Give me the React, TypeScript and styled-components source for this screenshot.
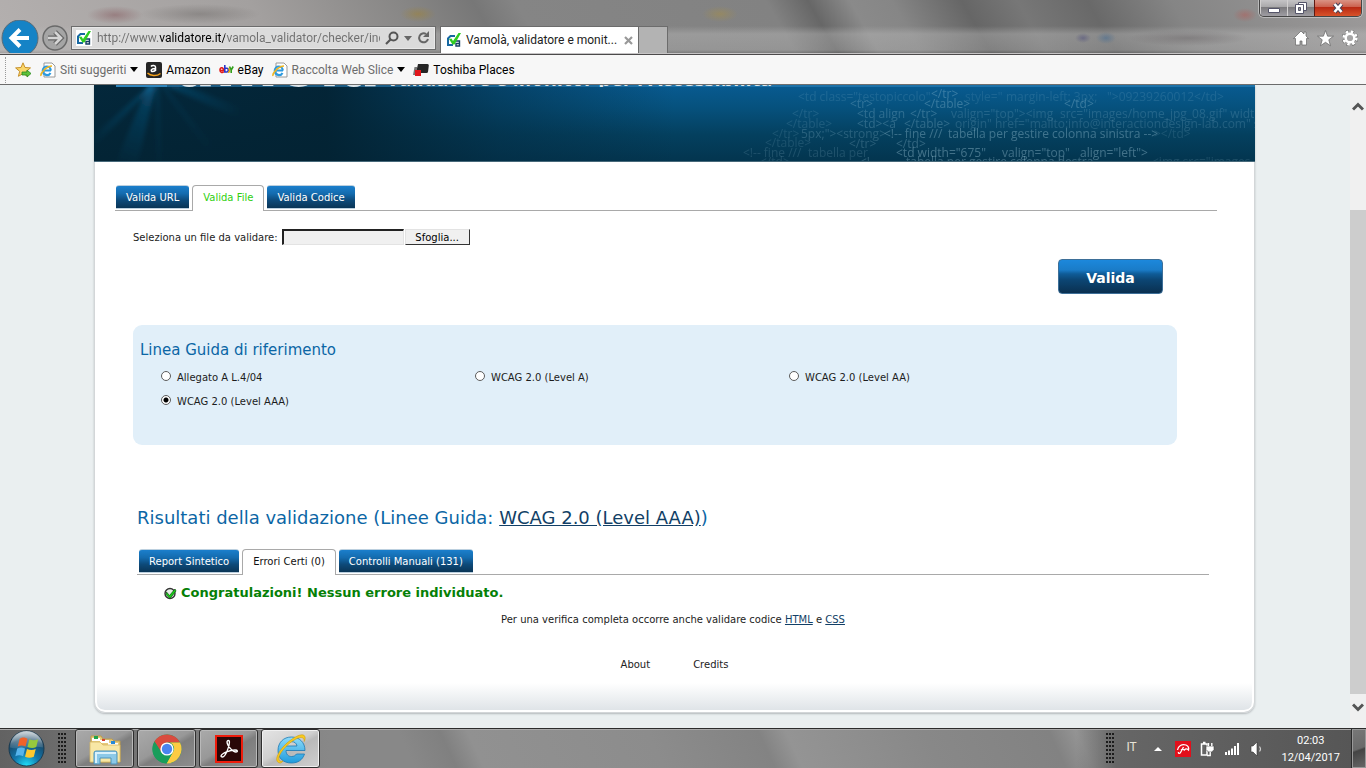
import React, { useState } from 'react';
import styled, { createGlobalStyle, css } from 'styled-components';

const ui = "Roboto, 'Noto Sans', sans-serif";
const web = "'DejaVu Sans', Verdana, sans-serif";

const GlobalStyle = createGlobalStyle`
  *, *::before, *::after { box-sizing: border-box; }
  body { margin: 0; overflow: hidden; background: #eaeff0; font-family: ${web}; font-size: 10px; color: #1c1c1c; }
  button, input { font: inherit; margin: 0; }
  h1, h2, p, ul, fieldset { margin: 0; padding: 0; border: 0; }
  svg { display: block; flex: none; }
`;

const Desktop = styled.div`
  display: flex;
  flex-direction: column;
  height: 100vh;
`;

/* Browser frame */

const TitleBar = styled.header`
  display: flex;
  align-items: flex-end;
  height: 54px;
  flex: none;
  overflow: hidden;
  border-bottom: 1px solid #c6c4c5;
  background:
    radial-gradient(ellipse 28px 9px at 115px 15px, rgba(122, 66, 72, 0.4), transparent),
    radial-gradient(ellipse 60px 10px at 200px 14px, rgba(90, 86, 84, 0.35), transparent),
    radial-gradient(ellipse 18px 8px at 418px 14px, rgba(160, 130, 50, 0.5), transparent),
    radial-gradient(ellipse 18px 8px at 720px 14px, rgba(160, 140, 80, 0.6), transparent),
    radial-gradient(ellipse 12px 7px at 1245px 15px, rgba(180, 90, 85, 0.5), transparent),
    radial-gradient(ellipse 8px 5px at 1083px 38px, rgba(85, 85, 125, 0.6), transparent),
    radial-gradient(ellipse 10px 6px at 1106px 38px, rgba(75, 110, 145, 0.6), transparent),
    radial-gradient(ellipse 60px 8px at 1188px 38px, rgba(105, 100, 102, 0.5), transparent),
    linear-gradient(to bottom, transparent 26px, rgba(190, 190, 190, 0.4) 34px, rgba(190, 190, 190, 0.3) 50px, rgba(100, 100, 100, 0.2)),
    linear-gradient(60deg, #b4b0af 0, #a3a09f 20%, #878685 31%, #777 36%, #858585 39%, #828282 57%, #676767 60%, #8a8a8a 63%, #868686 66%, #666 71%, #777 75%, #696969 80%, #858585 86%, #9c9a9a 100%);
`;

const NavGroup = styled.div`
  display: flex;
  align-items: center;
  height: 31px;
  flex: none;
`;

const RoundButton = styled.button`
  padding: 0;
  border: 0;
  background: none;
  height: 36px;
`;

const AddressBar = styled.div`
  display: flex;
  align-items: center;
  gap: 5px;
  width: 365px;
  height: 24px;
  flex: none;
  margin: 0 4px 3px 2px;
  padding: 0 5px 0 4px;
  border: 1px solid #6c6c6c;
  background: #dbdbdb;
  box-shadow: inset 0 0 0 1px #e8e8e8;
`;

const AddressInput = styled.input`
  flex: 1;
  min-width: 0;
  padding: 0;
  border: 0;
  outline: 0;
  font-family: ${ui};
  font-size: 12px;
  line-height: 18px;
  -webkit-text-fill-color: transparent;
  background: linear-gradient(to right, #6f6f6f 62px, #000 62px 128px, #6f6f6f 128px);
  background-clip: text;
`;

const IconButton = styled.button`
  display: grid;
  place-items: center;
  padding: 0;
  border: 0;
  background: none;
`;

const BrowserTab = styled.div`
  display: flex;
  align-items: center;
  gap: 4px;
  width: 199px;
  height: 27px;
  padding: 0 5px;
  border: 1px solid #6c6c6c;
  border-bottom: 0;
  background: #fff;
  font-family: ${ui};
  font-size: 12px;
  color: #222;
  flex: none;
  white-space: nowrap;
  span { flex: 1; }
`;

const NewTab = styled.button`
  width: 29px;
  height: 27px;
  padding: 0;
  border: 1px solid #6c6c6c;
  border-width: 1px 1px 0 0;
  background: #b3b3b3;
`;

const TitleRight = styled.div`
  display: flex;
  flex-direction: column;
  align-items: flex-end;
  justify-content: space-between;
  height: 54px;
  margin-left: auto;
  padding: 0 4px 6px 0;
`;

const WindowButtons = styled.div`
  display: flex;
  height: 18px;
  border: 1px solid #454545;
  border-top: 0;
  border-radius: 0 0 5px 5px;
  overflow: hidden;
  box-shadow: 0 0 0 1px rgba(230, 230, 230, 0.5);
`;

const WindowButton = styled.button<{ $close?: boolean }>`
  display: grid;
  place-items: center;
  width: ${p => (p.$close ? 47 : 27)}px;
  padding: 0;
  border: 0;
  border-left: 1px solid ${p => (p.$close ? '#5e1a12' : '#d2d0d0')};
  background: ${p => p.$close
    ? 'linear-gradient(#dc9a8c 0, #cc6350 45%, #b92a14 50%, #d8532a 100%)'
    : 'linear-gradient(#c9c8ca 0, #aaa9ab 45%, #7c7b7e 50%, #9f9da3 100%)'};
`;

const Tools = styled.div`
  display: flex;
  gap: 8px;
  height: 18px;
  padding-right: 4px;
`;

const FavoritesBar = styled.nav`
  display: flex;
  align-items: center;
  height: 31px;
  flex: none;
  padding: 0 5px;
  border-top: 1px solid #4c4a4b;
  border-bottom: 1px solid #6b6b6b;
  background: #f7f7f7;
  font-family: ${ui};
  font-size: 12px;
`;

const Favorite = styled.a<{ $muted?: boolean }>`
  display: flex;
  align-items: center;
  gap: 4px;
  margin-left: 8px;
  color: ${p => (p.$muted ? '#6d6d6d' : '#000')};
  text-decoration: none;
  white-space: nowrap;
`;

const Grip = styled.span`
  height: 26px;
  border-left: 1px dotted #9a9a9a;
  margin-right: 9px;
`;

/* Page */

const Viewport = styled.div`
  display: flex;
  flex: 1;
  min-height: 0;
`;

const PageArea = styled.div`
  flex: 1;
  min-width: 0;
  padding: 0 95px 15px 94px;
  background: #eaeff0;
`;

const Card = styled.main`
  display: flex;
  flex-direction: column;
  height: 100%;
  border: 1px solid #d3d6d8;
  border-top: 0;
  border-radius: 0 0 11px 11px;
  background: linear-gradient(to top, #dde2e6 0, #fff 29px);
  box-shadow: inset 0 -2px 0 #fff, inset 2px 0 0 #fff, inset -2px 0 0 #fff, 0 1px 2px #b4b9bc;
`;

const Banner = styled.div`
  position: relative;
  height: 77px;
  flex: none;
  margin: 0 -1px;
  overflow: hidden;
  border-bottom: 1px solid #47697a;
  background:
    linear-gradient(to right, rgba(3, 34, 50, 0.9) 0, rgba(3, 34, 50, 0.95) 20%, rgba(3, 42, 64, 0.5) 35%, transparent 50%),
    linear-gradient(to bottom, #085b91 0, #06517d 30%, #04405f 65%, #03354f 100%);
`;

const BannerArt = styled.svg<{ $side: 'left' | 'right' }>`
  position: absolute;
  top: 0;
  ${p => p.$side}: 0;
`;

/* Only the foot of the logotype shows while the page is scrolled */
const Brand = styled.div`
  position: relative;
  display: flex;
  align-items: baseline;
  height: 52px;
  margin-top: -50px;
  padding-left: 81px;
  overflow: hidden;
  color: #dfe6ea;
  h1 { font-size: 60px; line-height: 60px; font-weight: bold; }
  p { margin-left: 6px; font: bold 20px/24px 'Open Sans', sans-serif; white-space: nowrap; }
`;

const TabList = styled.div<{ $inner?: boolean }>`
  display: flex;
  gap: 3px;
  height: 26px;
  flex: none;
  margin: ${p => (p.$inner ? '19px 45px 0 42px' : '23px 37px 0 20px')};
  padding-left: ${p => (p.$inner ? 2 : 1)}px;
  border-bottom: 1px solid #a9a9a9;
`;

const Tab = styled.button<{ $active?: boolean; $accent?: string }>`
  height: 24px;
  padding: 0 10px;
  border: 1px solid #bcd0df;
  border-width: 1px 0;
  border-radius: 3px 3px 0 0;
  background: linear-gradient(#1b7fcc 0, #146bae 35%, #0d4a7a 65%, #0a3556 100%);
  color: #fff;
  white-space: nowrap;
  ${p => p.$active && css`
    position: relative;
    height: 26px;
    padding-bottom: 2px;
    border-color: #a9a9a9;
    border-width: 1px 1px 0;
    border-radius: 4px 4px 0 0;
    background: #fff;
    color: ${p.$accent};
  `}
`;

const FileRow = styled.div`
  display: flex;
  align-items: center;
  height: 16px;
  margin: 18px 38px 0;
  input { width: 122px; height: 16px; margin: 0 1px 0 4px; padding: 0 3px; border: solid #e3e3e3; border-top-color: #222; border-left-color: #222; border-width: 2px 1px 1px 2px; background: #f0f0f0; outline: 0; }
  button { width: 65px; height: 16px; padding: 1px 0 0; border: 1px solid #e3e3e3; border-right-color: #333; border-bottom-color: #333; background: #f0f0f0; line-height: 14px; color: #000; }
`;

const SubmitButton = styled.button`
  align-self: flex-end;
  width: 105px;
  height: 35px;
  flex: none;
  margin: 14px 91px 0 0;
  padding: 2px 0 0;
  border: 1px solid #3d6f98;
  border-radius: 4px;
  background: linear-gradient(#1c88dc 0, #1a7cc8 30%, #0f5c98 42%, #0c4674 60%, #0a3050 100%);
  color: #fff;
  font-size: 14px;
  font-weight: bold;
`;

const Guidelines = styled.fieldset`
  flex: none;
  height: 120px;
  margin: 31px 77px 0 38px;
  padding: 16px 75px 0 7px;
  border-radius: 9px;
  background: #e1eff9;
`;

const GuidelinesTitle = styled.h2`
  font-size: 15px;
  line-height: 18px;
  font-weight: normal;
  color: #0b66a5;
`;

const Options = styled.div`
  display: grid;
  grid-template-columns: repeat(3, 1fr);
  row-gap: 8px;
  margin: 10px 0 0 20px;
`;

const Option = styled.label`
  display: flex;
  align-items: center;
  gap: 6px;
  height: 16px;
  input {
    appearance: none;
    width: 10px;
    height: 10px;
    margin: 0 0 2px 1px;
    border: 1px solid #5c5c5c;
    border-radius: 50%;
    background: #fff;
  }
  input:checked { background: radial-gradient(#000 0 2px, #fff 3px); }
`;

const ResultTitle = styled.h2`
  flex: none;
  margin: 61px 42px 0;
  font-size: 18px;
  line-height: 24px;
  font-weight: normal;
  color: #0b66a5;
  white-space: nowrap;
`;

const TextLink = styled.a`
  color: #123f66;
  text-decoration: underline;
`;

const Success = styled.p`
  display: flex;
  align-items: center;
  gap: 4px;
  margin: 9px 69px 0;
  font-size: 13px;
  line-height: 18px;
  font-weight: bold;
  color: #068006;
`;

const CheckNote = styled.p`
  margin-top: 11px;
  padding-right: 3px;
  line-height: 14px;
  text-align: center;
`;

const Footer = styled.footer`
  display: flex;
  justify-content: center;
  gap: 43px;
  margin-top: 31px;
  line-height: 14px;
  a { color: #222; text-decoration: none; }
`;

const ScrollBar = styled.div`
  display: flex;
  flex-direction: column;
  width: 16px;
  flex: none;
  background: #f0f0f0;
`;

const ScrollButton = styled(IconButton)<{ $end?: boolean }>`
  height: ${p => (p.$end ? 34 : 42)}px;
  margin-bottom: ${p => (p.$end ? 0 : 83)}px;
  padding-bottom: ${p => (p.$end ? 8 : 0)}px;
`;

const ScrollThumb = styled.div`
  flex: 1;
  background: #cdcdcd;
`;

/* Taskbar */

const Taskbar = styled.footer`
  display: flex;
  align-items: center;
  height: 40px;
  flex: none;
  border-top: 1px solid #2c2c2c;
  box-shadow: inset 0 1px 0 #aaa;
  background:
    linear-gradient(to right, #626262 0, #6c6c6c 60px, transparent 330px),
    linear-gradient(to left, #555 0, #666 250px, transparent 290px),
    linear-gradient(65deg, #888 30%, #808080 33%, #919191 35%, #8c8c8c 48%, #838383 56%, #949494 58%, #888 68%, #828282 77%, #949494 79%, #929292 83%, #7c7c7c 86%, #7a7a7a 100%);
  font-family: ${ui};
  color: #fff;
`;

const StartButton = styled(IconButton)`
  margin: 0 13px 0 8px;
`;

const Dots = styled.span`
  width: 9px;
  height: 32px;
  background: radial-gradient(circle at 1px 1px, #1c1c1c 1px, transparent 1px) 0 0 / 3px 4px;
`;

const TaskButtons = styled.div`
  display: flex;
  gap: 3px;
  margin-left: 8px;
`;

const TaskButton = styled(IconButton)<{ $active?: boolean }>`
  width: 59px;
  height: 39px;
  border: 1px solid #2e2e2e;
  border-radius: 3px;
  box-shadow: inset 0 0 0 1px ${p => (p.$active ? '#f0f0f0' : '#b9b9b9')};
  background: ${p => p.$active
    ? 'linear-gradient(150deg, #e4e4e4 0, #d0d0d0 45%, #b9b9b9 55%, #cfcfcf 100%)'
    : 'linear-gradient(150deg, #aaa 0, #989898 45%, #7e7e7e 55%, #8d8d8d 100%)'};
`;

const Tray = styled.div`
  display: flex;
  align-items: center;
  height: 100%;
  margin-left: auto;
`;

const Language = styled.span`
  width: 16px;
  margin: 0 8px 4px 11px;
  font-size: 12px;
  color: #e8e4d8;
`;

const TrayIcons = styled.div`
  display: flex;
  align-items: center;
  gap: 9px;
  button { width: 16px; }
`;

const Clock = styled.time`
  margin: 0 12px 0 16px;
  text-align: center;
  font-size: 11px;
  line-height: 17px;
`;

const ShowDesktop = styled.button`
  width: 14px;
  height: 39px;
  padding: 0;
  border: 1px solid #999;
  outline: 1px solid #2b2b2b;
  background: linear-gradient(160deg, #777 0, #6a6a6a 50%, #444 55%, #666 100%);
`;

/* Icons */

const VamolaIcon = () => (
  <svg width="16" height="16" viewBox="0 0 16 16">
    <path d="M0 0h16v16H0z" fill="#fff" />
    <path d="M9 4H4.500L2 6.500V13h5" fill="none" stroke="#1768a2" strokeWidth="2" />
    <path d="M9.800 9h3.700v5H10v-2.500h3.500" fill="none" stroke="#143f63" strokeWidth="1.400" />
    <path d="M3 7l2.500-.5L7 9l5.500-8H15L8.500 12.500h-2z" fill="#2fcb22" />
  </svg>
);

const IePageIcon = () => (
  <svg width="16" height="16" viewBox="0 0 16 16">
    <path d="M4 1h8l3 3v11H4z" fill="#fff" stroke="#999" />
    <path d="M11 8.500H2.800a4 4 0 0 1 8 0M3 9a4 4 0 0 0 7.500 2" fill="none" stroke="#2d9adf" strokeWidth="2.200" />
    <path d="M1 14c-1-3 6-10 11-10" fill="none" stroke="#f0b51f" strokeWidth="1.500" />
  </svg>
);

const Caret = ({ color = '#000' }: { color?: string }) => (
  <svg width="8" height="5" viewBox="0 0 8 5"><path d="M0 0h8L4 5z" fill={color} /></svg>
);

const IeIcon = () => (
  <svg width="32" height="32" viewBox="0 0 32 32">
    <defs>
      <linearGradient id="ie" x1="0" y1="0" x2="0" y2="1"><stop offset="0" stopColor="#8fdcfa" /><stop offset="1" stopColor="#1f9bdd" /></linearGradient>
    </defs>
    <path d="M30 17.500H11c0 4 2.500 6 5.500 6 2.500 0 4-1 5-2.500h8c-2 6-6.500 9-13 9C8 30 3 25 3 17.500 3 9.500 8.500 4 16.500 4S30 9.500 30 17.500zM22 13c-.5-3-2.500-4.300-5.500-4.300S11.500 10.500 11 13z" fill="url(#ie)" stroke="#1b78b4" strokeWidth=".8" />
    <path d="M5 30C-2 29 3 18 12 10 20 3 29-1 30 4c.4 1.300 0 3-.8 4.500C29.500 5 27 3 21 6 11 11 2 23 4 27c.6 1.500 2 1.500 4 1-1 1.300-2 2-3 2z" fill="#f8cb1c" stroke="#cf9b10" strokeWidth=".6" />
  </svg>
);

const ChromeIcon = () => (
  <svg width="30" height="30" viewBox="0 0 30 30">
    <circle cx="15" cy="15" r="14.500" fill="#199d5b" />
    <path d="M2.500 7.500A14.500 14.500 0 0 1 28 8.500H15a6.500 6.500 0 0 0-6.300 5z" fill="#d94b3f" />
    <path d="M28 8.500a14.500 14.500 0 0 1-13.500 21l6.200-11A6.500 6.500 0 0 0 18 8.500z" fill="#fbcb43" />
    <path d="M2.500 7.500L9.400 18.500 15 15V8.500z" fill="#d94b3f" />
    <path d="M2.500 7.500A14.500 14.500 0 0 0 14.500 29.500l6-11-11 0z" fill="#199d5b" />
    <circle cx="15" cy="15" r="6.600" fill="#fff" />
    <circle cx="15" cy="15" r="5.200" fill="#4a84f0" />
  </svg>
);

const FolderIcon = () => (
  <svg width="34" height="32" viewBox="0 0 34 32">
    <path d="M3 3h10l2 3h9l2 2h6v21H3z" fill="#e7cb7c" stroke="#bd9c4a" />
    <path d="M4 5h8v3H4zM12 7h9v3h-9zM20 10h10v3H20z" fill="#fff" />
    <path d="M6 3h4v3H6z" fill="#1fa34a" /><path d="M14 6h3v2h-3z" fill="#d8412c" /><path d="M23 8h4v3h-4z" fill="#2488d8" />
    <path d="M2 9h10l3 3h17v17H2z" fill="#f8e7a5" stroke="#d6b863" strokeWidth=".8" />
    <path d="M6 31V20q0-2 2-2h19q2 0 2 2v11h-6v-6H12v6z" fill="#8cc9e8" stroke="#4d93bb" />
    <path d="M7 20h21M8 20v10" stroke="#d9f1fb" strokeWidth="2" />
  </svg>
);

const AcrobatIcon = () => (
  <svg width="28" height="28" viewBox="0 0 28 28">
    <path d="M1 1h26v26H1z" fill="#2a0707" stroke="#ee1c0c" strokeWidth="2" />
    <path d="M6 21c1-3 9-6 14-6 3 0 3 2 1 2-3 0-9-6-9-10 0-2 2.500-2 2.500 0 0 4-4 15-7 15-1 0-1.500-.5-1.500-1z" fill="none" stroke="#fff" strokeWidth="1.300" />
  </svg>
);

const StartOrb = () => (
  <svg width="37" height="37" viewBox="0 0 38 38">
    <defs>
      <radialGradient id="orb" cx=".5" cy="1" r=".95"><stop offset="0" stopColor="#22e2fb" /><stop offset=".4" stopColor="#1277ac" /><stop offset=".8" stopColor="#174767" /><stop offset="1" stopColor="#6e8797" /></radialGradient>
      <linearGradient id="shine" x1="0" y1="0" x2="0" y2="1"><stop offset="0" stopColor="#fff" stopOpacity=".65" /><stop offset="1" stopColor="#fff" stopOpacity=".1" /></linearGradient>
    </defs>
    <circle cx="19" cy="19" r="18" fill="url(#orb)" stroke="#1b3b50" />
    <path d="M2 18a17 17 0 0 1 34 0c-10-3-23 3-34 0z" fill="url(#shine)" />
    <path d="M12 9c3-2 5-1.500 8 0l-2 8c-3-1.500-5-1.500-8 0z" fill="#f0622a" />
    <path d="M22 9.500c3 1.500 6 1.500 9 0l-2 8c-3 1.500-6 1-9 0z" fill="#97c93c" />
    <path d="M9.500 19c3-1.500 5-1.500 8 0l-2 8c-3-1.500-5-1.500-8 0z" fill="#56b4ec" />
    <path d="M19.500 19.500c3 1.500 6 1.500 9 0l-2 8c-3 1.500-6 1.500-9 0z" fill="#fdc82f" />
  </svg>
);

/* Each fragment: x, baseline, opacity, source text */
const codeLines: [number, number, number, string][] = [
  [58, 16, 0.14, '<td class="testopiccolo"'], [225, 16, 0.12, 'style="'], [266, 16, 0.14, 'margin-left: 3px;'], [367, 16, 0.14, '">09239260012</td>'],
  [191, 13, 0.3, '</tr>'],
  [110, 23, 0.25, '<tr>'], [184, 23, 0.3, '</table>'], [324, 23, 0.3, '</td>'],
  [52, 33, 0.15, '</tr>'], [117, 33, 0.25, '<td align'], [170, 33, 0.28, '</tr>'],
  [211, 33, 0.18, 'valign="top"><img'], [320, 33, 0.18, 'src="images/home_jpg_08.gif" width'],
  [46, 43, 0.15, '</table>'], [117, 43, 0.25, '<td><a'], [164, 43, 0.26, '</table>'], [215, 43, 0.18, 'origin" href="mailto:info@interactiondesign-lab.com" st'],
  [32, 53, 0.14, '</tr>'], [61, 53, 0.22, '5px;"><strong>'], [144, 53, 0.34, '<!-- fine ///'], [208, 53, 0.36, 'tabella per gestire colonna sinistra -->'], [414, 53, 0.14, '></td>'],
  [25, 62, 0.14, '</table>'], [109, 63, 0.22, '</tr>'], [156, 63, 0.28, '</td>'],
  [3, 72, 0.16, '<!-- fine ///'], [68, 72, 0.16, 'tabella per'],
  [156, 72, 0.38, '<td width="675"'], [262, 72, 0.36, 'valign="top"'], [340, 72, 0.38, 'align="left">'],
  [20, 81, 0.15, '</td>'], [120, 81, 0.25, '<!--'], [166, 81, 0.32, 'tabella per gestire colonna destra'], [412, 81, 0.15, '<img src="images'],
];

const CodePattern = () => (
  <BannerArt $side="right" width="515" height="77" aria-hidden="true">
    <g fill="#a8cfe0" fontFamily="'Open Sans', sans-serif" fontSize="12">
      {codeLines.map(([x, y, o, t], i) => <text key={i} x={x} y={y} opacity={o}>{t}</text>)}
    </g>
  </BannerArt>
);

const Rays = () => (
  <BannerArt $side="left" width="100%" height="77" aria-hidden="true">
    <defs>
      <radialGradient id="glow" cx="62" cy="0" r="90" gradientUnits="userSpaceOnUse"><stop offset="0" stopColor="#1c8ccb" stopOpacity=".5" /><stop offset=".3" stopColor="#0f6799" stopOpacity=".3" /><stop offset="1" stopColor="#0f6799" stopOpacity="0" /></radialGradient>
      <filter id="soft"><feGaussianBlur stdDeviation="2" /></filter>
    </defs>
    <g fill="url(#glow)" filter="url(#soft)">
      <path d="M56 0L0 50V62L60 0z" /><path d="M54 0L22 77H44L62 0z" /><path d="M62 0L62 77H68L65 0z" opacity=".4" /><path d="M70 0L160 40 170 32 90 0z" /><path d="M66 0L120 77H134L70 0z" opacity=".3" />
    </g>
    <path d="M73 1H2000" stroke="#2f86be" strokeWidth="2" opacity=".55" />
    <path d="M22 0h51v2H22z" fill="#2f86be" />
  </BannerArt>
);

const guidelines = ['Allegato A L.4/04', 'WCAG 2.0 (Level A)', 'WCAG 2.0 (Level AA)', 'WCAG 2.0 (Level AAA)'];

export default function App() {
  const [url, setUrl] = useState('http://www.validatore.it/vamola_validator/checker/index.php');
  const [level, setLevel] = useState(guidelines[3]);
  return (
    <Desktop>
      <GlobalStyle />
      <TitleBar>
        <NavGroup>
          <RoundButton aria-label="Indietro">
            <svg width="41" height="36" viewBox="0 0 41 36">
              <circle cx="20" cy="18" r="18" fill="#1583c6" stroke="#5b6b76" />
              <path d="M29 18H13M20 9.500L11.500 18l8.500 8.500" fill="none" stroke="#fff" strokeWidth="4" />
            </svg>
          </RoundButton>
          <RoundButton aria-label="Avanti">
            <svg width="28" height="36" viewBox="0 0 28 36">
              <circle cx="14" cy="18" r="12" fill="#a5a5a5" stroke="#696969" strokeWidth="1.500" />
              <path d="M7 18h11M14 12l6 6-6 6" fill="none" stroke="#666" strokeWidth="5" />
              <path d="M7 18h11M14 12l6 6-6 6" fill="none" stroke="#d4d4d4" strokeWidth="2.600" />
            </svg>
          </RoundButton>
        </NavGroup>
        <AddressBar>
          <VamolaIcon />
          <AddressInput aria-label="Indirizzo" value={url} onChange={e => setUrl(e.target.value)} />
          <IconButton aria-label="Cerca"><svg width="14" height="14" viewBox="0 0 14 14"><circle cx="8.500" cy="5.500" r="4" fill="none" stroke="#555" strokeWidth="2" /><path d="M5.500 8.500L1 13" stroke="#555" strokeWidth="2.200" /></svg></IconButton>
          <IconButton aria-label="Cronologia"><Caret color="#666" /></IconButton>
          <IconButton aria-label="Aggiorna"><svg width="13" height="14" viewBox="0 0 13 14"><path d="M9 3A4.500 4.500 0 1 0 11 8" fill="none" stroke="#666" strokeWidth="2" /><path d="M12 0v6H6z" fill="#666" /></svg></IconButton>
        </AddressBar>
        <BrowserTab>
          <VamolaIcon />
          <span>Vamolà, validatore e monit...</span>
          <IconButton aria-label="Chiudi scheda"><svg width="9" height="9" viewBox="0 0 9 9"><path d="M1 1l7 7M8 1L1 8" stroke="#999" strokeWidth="2.200" /></svg></IconButton>
        </BrowserTab>
        <NewTab aria-label="Nuova scheda" />
        <TitleRight>
          <WindowButtons>
            <WindowButton aria-label="Riduci a icona"><svg width="12" height="12" viewBox="0 0 12 12"><path d="M.5 6.500h11v4H.5z" fill="#fff" stroke="#55556a" /></svg></WindowButton>
            <WindowButton aria-label="Ripristina"><svg width="12" height="12" viewBox="0 0 12 12"><path d="M3.500.5h8v8h-8z" fill="#fff" stroke="#55556a" /><path d="M.5 2.500h8v9h-8z" fill="#fff" stroke="#55556a" /><path d="M3.500 5.500h2v3h-2z" fill="#999" stroke="#55556a" /></svg></WindowButton>
            <WindowButton $close aria-label="Chiudi"><svg width="12" height="12" viewBox="0 0 12 12"><path d="M2.500 2l7 8M9.500 2l-7 8" stroke="#4c4458" strokeWidth="4.600" /><path d="M2.500 2l7 8M9.500 2l-7 8" stroke="#fff" strokeWidth="2.600" /></svg></WindowButton>
          </WindowButtons>
          <Tools>
            <IconButton aria-label="Home"><svg width="16" height="16" viewBox="0 0 16 16"><path d="M8 1L.5 8.500h2V15H7v-4h2v4h4.500V8.500h2L13 6V2h-2v2z" fill="#fff" stroke="#666" strokeWidth=".7" /></svg></IconButton>
            <IconButton aria-label="Preferiti"><svg width="17" height="17" viewBox="0 0 16 16"><path d="M8 .5l2 5.300h5.500l-4.400 3.400 1.600 5.600L8 11.600l-4.700 3.200 1.600-5.600L.5 5.800H6z" fill="#fff" stroke="#666" strokeWidth=".7" /></svg></IconButton>
            <IconButton aria-label="Strumenti"><svg width="16" height="16" viewBox="0 0 16 16"><circle cx="8" cy="8" r="6.300" fill="none" stroke="#666" strokeWidth="3.800" strokeDasharray="2.900 2.050" /><circle cx="8" cy="8" r="6.300" fill="none" stroke="#fff" strokeWidth="2.800" strokeDasharray="2.500 2.450" /><circle cx="8" cy="8" r="4.300" fill="none" stroke="#fff" strokeWidth="2.400" /></svg></IconButton>
          </Tools>
        </TitleRight>
      </TitleBar>

      <FavoritesBar aria-label="Preferiti">
        <Grip />
        <IconButton aria-label="Aggiungi ai preferiti">
          <svg width="17" height="16" viewBox="0 0 17 16"><path d="M8 .8l2 4.700 5.500.4-4.200 3.400 1.300 5L8 11.600l-4.600 2.700 1.300-5L.6 5.900 6 5.500z" fill="#fbd76b" stroke="#c6902a" /><path d="M7 10h5V8l4 3.500-4 3.500v-2H7z" fill="#5fc13a" stroke="#2a8c22" strokeWidth=".8" /></svg>
        </IconButton>
        <Favorite href="#siti" $muted><IePageIcon />Siti suggeriti<Caret /></Favorite>
        <Favorite href="#amazon">
          <svg width="16" height="16" viewBox="0 0 16 16"><rect width="16" height="16" rx="2" fill="#252525" /><path d="M5 4.500c1-1.500 4.500-1.500 4.500.5v4M9.500 6.500c-5-.3-5 3-3 3 1.500 0 3-1 3-2.500" fill="none" stroke="#fff" strokeWidth="1.500" /><path d="M1.500 11c3 3 9 3.500 13 .5" fill="none" stroke="#f5a21c" strokeWidth="1.500" /></svg>
          Amazon
        </Favorite>
        <Favorite href="#ebay">
          <svg width="15" height="10" viewBox="0 0 15 10" fill="none" strokeWidth="1.600"><path d="M1 5.500h3.500C4.500 2 1 2 1 5s3 3 3.500 1.500" stroke="#e01818" /><path d="M5.800 0v7h2c2 0 2-3.800 0-3.800h-2" stroke="#2a35c8" /><path d="M9 7c2 1 2-3 .5-3.800" stroke="#e8a80c" /><path d="M10.500 1.500l1.700 3.500v3M14.200 1.500L12.200 5" stroke="#33a01c" /></svg>
          eBay
        </Favorite>
        <Favorite href="#slice" $muted><IePageIcon />Raccolta Web Slice<Caret /></Favorite>
        <Favorite href="#toshiba">
          <svg width="16" height="14" viewBox="0 0 16 14"><path d="M5 1h9.500q1.500 0 1.300 1.500L15 9q-.2 1-1.500 1H3z" fill="#252525" /><path d="M1.500 4H4v8H0z" fill="#777" /><path d="M2 7h6v6H2z" fill="#e1161c" /></svg>
          Toshiba Places
        </Favorite>
      </FavoritesBar>

      <Viewport>
        <PageArea>
          <Card>
            <Banner>
              <Rays />
              <CodePattern />
              <Brand>
                <h1>amolà</h1>
                <p>Validatore e Monitor per l'Accessibilità</p>
              </Brand>
            </Banner>
            <TabList role="tablist">
              <Tab role="tab">Valida URL</Tab>
              <Tab role="tab" $active $accent="#2fcf10" aria-selected>Valida File</Tab>
              <Tab role="tab">Valida Codice</Tab>
            </TabList>
            <FileRow>
              <label htmlFor="file">Seleziona un file da validare:</label>
              <input id="file" type="text" readOnly />
              <button type="button">Sfoglia...</button>
            </FileRow>
            <SubmitButton type="submit">Valida</SubmitButton>
            <Guidelines>
              <GuidelinesTitle>Linea Guida di riferimento</GuidelinesTitle>
              <Options>
                {guidelines.map(g => (
                  <Option key={g}>
                    <input type="radio" name="level" checked={level === g} onChange={() => setLevel(g)} />
                    {g}
                  </Option>
                ))}
              </Options>
            </Guidelines>
            <ResultTitle>Risultati della validazione (Linee Guida: <TextLink href="#wcag">WCAG 2.0 (Level AAA)</TextLink>)</ResultTitle>
            <TabList role="tablist" $inner>
              <Tab role="tab">Report Sintetico</Tab>
              <Tab role="tab" $active $accent="#111" aria-selected>Errori Certi (0)</Tab>
              <Tab role="tab">Controlli Manuali (131)</Tab>
            </TabList>
            <Success>
              <svg width="13" height="13" viewBox="0 0 13 13"><circle cx="6" cy="6.500" r="5" fill="#e8efe8" stroke="#333" strokeWidth="1.400" /><path d="M2.500 5l3 3.500L11 2l1 2-6 7.500L2 7.500z" fill="#18d018" stroke="#0a4a0a" strokeWidth=".7" /></svg>
              Congratulazioni! Nessun errore individuato.
            </Success>
            <CheckNote>Per una verifica completa occorre anche validare codice <TextLink href="#html">HTML</TextLink> e <TextLink href="#css">CSS</TextLink></CheckNote>
            <Footer><a href="#about">About</a><a href="#credits">Credits</a></Footer>
          </Card>
        </PageArea>
        <ScrollBar>
          <ScrollButton aria-label="Scorri su"><svg width="12" height="9" viewBox="0 0 12 9"><path d="M1 7.500l5-5 5 5" fill="none" stroke="#555" strokeWidth="3" /></svg></ScrollButton>
          <ScrollThumb />
          <ScrollButton $end aria-label="Scorri giù"><svg width="12" height="9" viewBox="0 0 12 9"><path d="M1 1.500l5 5 5-5" fill="none" stroke="#555" strokeWidth="3" /></svg></ScrollButton>
        </ScrollBar>
      </Viewport>

      <Taskbar>
        <StartButton aria-label="Start"><StartOrb /></StartButton>
        <Dots />
        <TaskButtons>
          <TaskButton aria-label="Esplora risorse"><FolderIcon /></TaskButton>
          <TaskButton aria-label="Chrome"><ChromeIcon /></TaskButton>
          <TaskButton aria-label="Acrobat Reader"><AcrobatIcon /></TaskButton>
          <TaskButton $active aria-label="Internet Explorer"><IeIcon /></TaskButton>
        </TaskButtons>
        <Tray>
          <Dots />
          <Language>IT</Language>
          <TrayIcons>
            <IconButton aria-label="Mostra icone nascoste"><svg width="8" height="5" viewBox="0 0 8 5"><path d="M0 5h8L4 1z" fill="#fff" /></svg></IconButton>
            <svg width="16" height="16" viewBox="0 0 16 16"><path d="M0 0h16v16H0z" fill="#e30f1b" /><path d="M2.500 9C3 5 7 2.500 11 4c2 .8 3 3 2.500 5-1.500-1.500-3-1.500-4 0-1.500-1-2.500-1-3.500 0M8.500 6L5.500 11.500c-.8 1.500-2.500 1-2-.5" fill="none" stroke="#fff" strokeWidth="1.300" /></svg>
            <svg width="15" height="16" viewBox="0 0 15 16"><path d="M1.500 3h5.500v11H1.500zM3 1.500h2.500" fill="#666" stroke="#fff" strokeWidth="1.500" /><path d="M6 5h8v3.500L12 11H8.500L6 8.500z" fill="#fff" stroke="#444" strokeWidth=".6" /><path d="M8.500 5V2M11.800 5V2M10.200 11v3.500H7" fill="none" stroke="#fff" strokeWidth="1.400" /></svg>
            <svg width="17" height="14" viewBox="0 0 17 14"><path d="M1 10h2v3H1zM4 8.500h2V13H4zM7 6.500h2V13H7zM10 4h2v9h-2zM13 1h2v12h-2z" fill="#fff" /></svg>
            <svg width="15" height="16" viewBox="0 0 15 16"><path d="M1 5h2l4-4v14l-4-4H1z" fill="#fff" stroke="#333" strokeWidth=".6" /><path d="M9.500 5.500q2 2.500 0 5" fill="none" stroke="#ccc" strokeWidth="1.200" /></svg>
          </TrayIcons>
          <Clock>02:03<br />12/04/2017</Clock>
          <ShowDesktop aria-label="Mostra desktop" />
        </Tray>
      </Taskbar>
    </Desktop>
  );
}
